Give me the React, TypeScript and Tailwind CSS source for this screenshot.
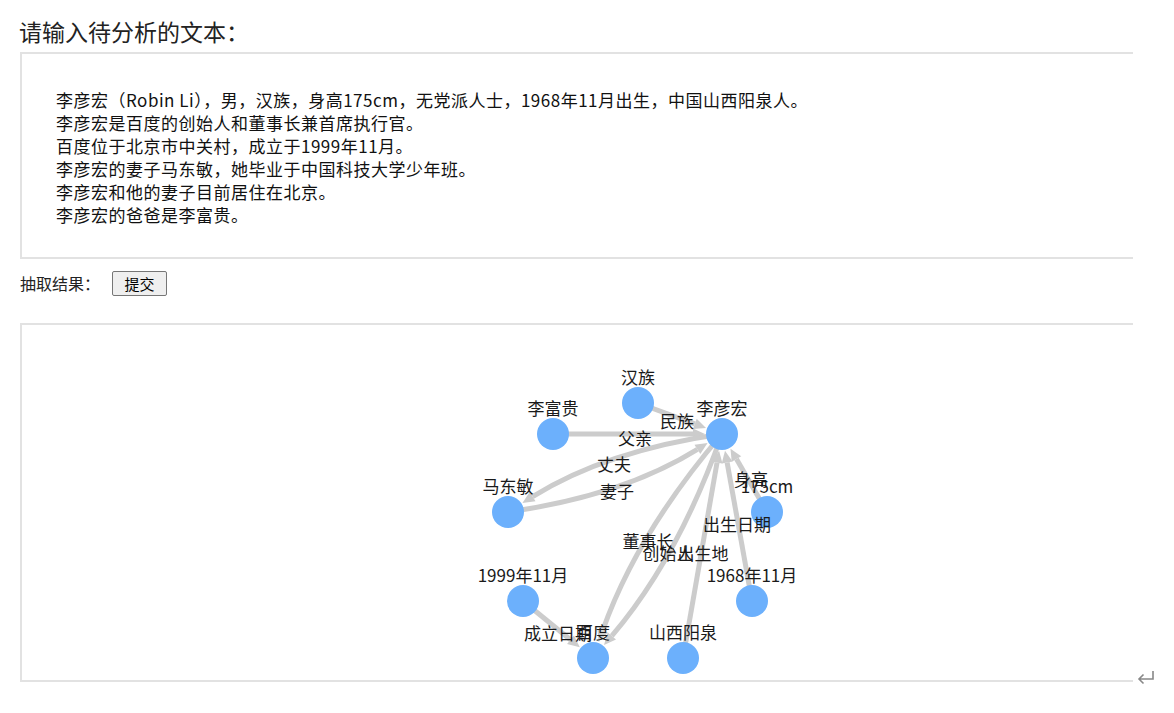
import React from "react";

type P = [number, number];

const nodes: { name: string; p: P }[] = [
  { name: "李彦宏", p: [722, 434] },
  { name: "汉族", p: [638, 403] },
  { name: "李富贵", p: [553, 434] },
  { name: "马东敏", p: [508, 512] },
  { name: "175cm", p: [767, 512] },
  { name: "1999年11月", p: [523, 601] },
  { name: "1968年11月", p: [752, 601] },
  { name: "百度", p: [593, 658] },
  { name: "山西阳泉", p: [683, 658] },
];

const N = (n: string): P => nodes.find((x) => x.name === n)!.p;

type E = { s: string; t: string; label: string; off?: number; lp?: P };

const edges: E[] = [
  { s: "汉族", t: "李彦宏", label: "民族", lp: [677, 420] },
  { s: "李富贵", t: "李彦宏", label: "父亲", lp: [635, 437] },
  { s: "李彦宏", t: "马东敏", label: "丈夫", off: 12, lp: [614, 463] },
  { s: "马东敏", t: "李彦宏", label: "妻子", off: 12, lp: [617, 490] },
  { s: "175cm", t: "李彦宏", label: "身高", lp: [751, 478] },
  { s: "1968年11月", t: "李彦宏", label: "出生日期", lp: [737, 523] },
  { s: "山西阳泉", t: "李彦宏", label: "出生地", lp: [703, 552] },
  { s: "李彦宏", t: "百度", label: "创始人", off: 12, lp: [668, 552] },
  { s: "李彦宏", t: "百度", label: "董事长", off: -12, lp: [648, 540] },
  { s: "1999年11月", t: "百度", label: "成立日期", lp: [558, 632] },
];

function edgeGeom(e: E) {
  const S = N(e.s);
  const T = N(e.t);
  const dx = T[0] - S[0];
  const dy = T[1] - S[1];
  const len = Math.hypot(dx, dy);
  const mid: P = [(S[0] + T[0]) / 2, (S[1] + T[1]) / 2];
  let C: P | null = null;
  if (e.off) {
    const px = -dy / len;
    const py = dx / len;
    C = [mid[0] + px * e.off * 2, mid[1] + py * e.off * 2];
  }
  const from = C ?? S;
  const tx = T[0] - from[0];
  const ty = T[1] - from[1];
  const tl = Math.hypot(tx, ty);
  const ux = tx / tl;
  const uy = ty / tl;
  const r = 17;
  const tip: P = [T[0] - ux * r, T[1] - uy * r];
  const base: P = [tip[0] - ux * 12, tip[1] - uy * 12];
  const w1: P = [base[0] - uy * 5.5, base[1] + ux * 5.5];
  const w2: P = [base[0] + uy * 5.5, base[1] - ux * 5.5];
  let d: string;
  if (C) {
    d = `M${S[0]},${S[1]} Q${C[0]},${C[1]} ${base[0]},${base[1]}`;
  } else {
    d = `M${S[0]},${S[1]} L${base[0]},${base[1]}`;
  }
  const arrow = `M${tip[0]},${tip[1]} L${w1[0]},${w1[1]} L${w2[0]},${w2[1]} Z`;
  return { d, arrow };
}

function Graph() {
  return (
    <svg
      width={1111}
      height={355}
      viewBox="22 325 1111 355"
      className="block"
      style={{ fontFamily: '"Noto Sans CJK SC", "Noto Sans", sans-serif' }}
    >
      {edges.map((e, i) => {
        const g = edgeGeom(e);
        return (
          <g key={i}>
            <path d={g.d} fill="none" stroke="#cccccc" strokeWidth={5} />
            <path d={g.arrow} fill="#cccccc" />
          </g>
        );
      })}
      {nodes.map((n) => (
        <circle key={n.name} cx={n.p[0]} cy={n.p[1]} r={16} fill="#6cb0fc" />
      ))}
      {edges.map((e, i) => (
        <text
          key={"l" + i}
          x={e.lp![0]}
          y={e.lp![1]}
          textAnchor="middle"
          dominantBaseline="central"
          fontSize={17}
          fill="#1a1a1a"
        >
          {e.label}
        </text>
      ))}
      {nodes.map((n) => (
        <text
          key={"n" + n.name}
          x={n.p[0]}
          y={n.p[1] - 27}
          textAnchor="middle"
          dominantBaseline="central"
          fontSize={17}
          fill="#1a1a1a"
        >
          {n.name}
        </text>
      ))}
    </svg>
  );
}

const lines = [
  "李彦宏（Robin Li），男，汉族，身高175cm，无党派人士，1968年11月出生，中国山西阳泉人。",
  "李彦宏是百度的创始人和董事长兼首席执行官。",
  "百度位于北京市中关村，成立于1999年11月。",
  "李彦宏的妻子马东敏，她毕业于中国科技大学少年班。",
  "李彦宏和他的妻子目前居住在北京。",
  "李彦宏的爸爸是李富贵。",
];

export default function App() {
  return (
    <div
      className="w-[1174px] h-[713px] overflow-hidden bg-white pl-[20px] text-[#111]"
      style={{ fontFamily: '"Noto Sans CJK SC", "Noto Sans", sans-serif' }}
    >
      <div className="mt-[16px] h-[30px] flex items-center text-[23px] leading-[30px] text-[#222] -ml-px">
        请输入待分析的文本：
      </div>
      <div className="mt-[6px] h-[207px] w-[1113px] border-l-2 border-t-2 border-b-2 border-[#e2e2e2] pl-[34px] pt-[34px]">
        {lines.map((l, i) => (
          <div key={i} className="text-[17px] leading-[23px] whitespace-nowrap tracking-[0.5px]">
            {l}
          </div>
        ))}
      </div>
      <div className="mt-[12px] h-[25px] flex items-center">
        <span className="text-[16px] leading-[25px] text-[#222]">抽取结果：</span>
        <button className="ml-[12px] h-[25px] w-[55px] border border-[#767676] rounded-[2px] bg-[#efefef] text-[15px] leading-none text-black">
          提交
        </button>
      </div>
      <div className="relative mt-[27px] h-[359px] w-[1113px] border-l-2 border-t-2 border-b-2 border-[#e2e2e2]">
        <Graph />
        <svg
          className="absolute left-[1113px] top-[343px]"
          width={22}
          height={20}
          viewBox="0 0 22 20"
        >
          <path d="M18 3 V11 H4 M8.5 6.5 L4 11 L8.5 15.5" fill="none" stroke="#888" strokeWidth={1.6} />
        </svg>
      </div>
    </div>
  );
}
